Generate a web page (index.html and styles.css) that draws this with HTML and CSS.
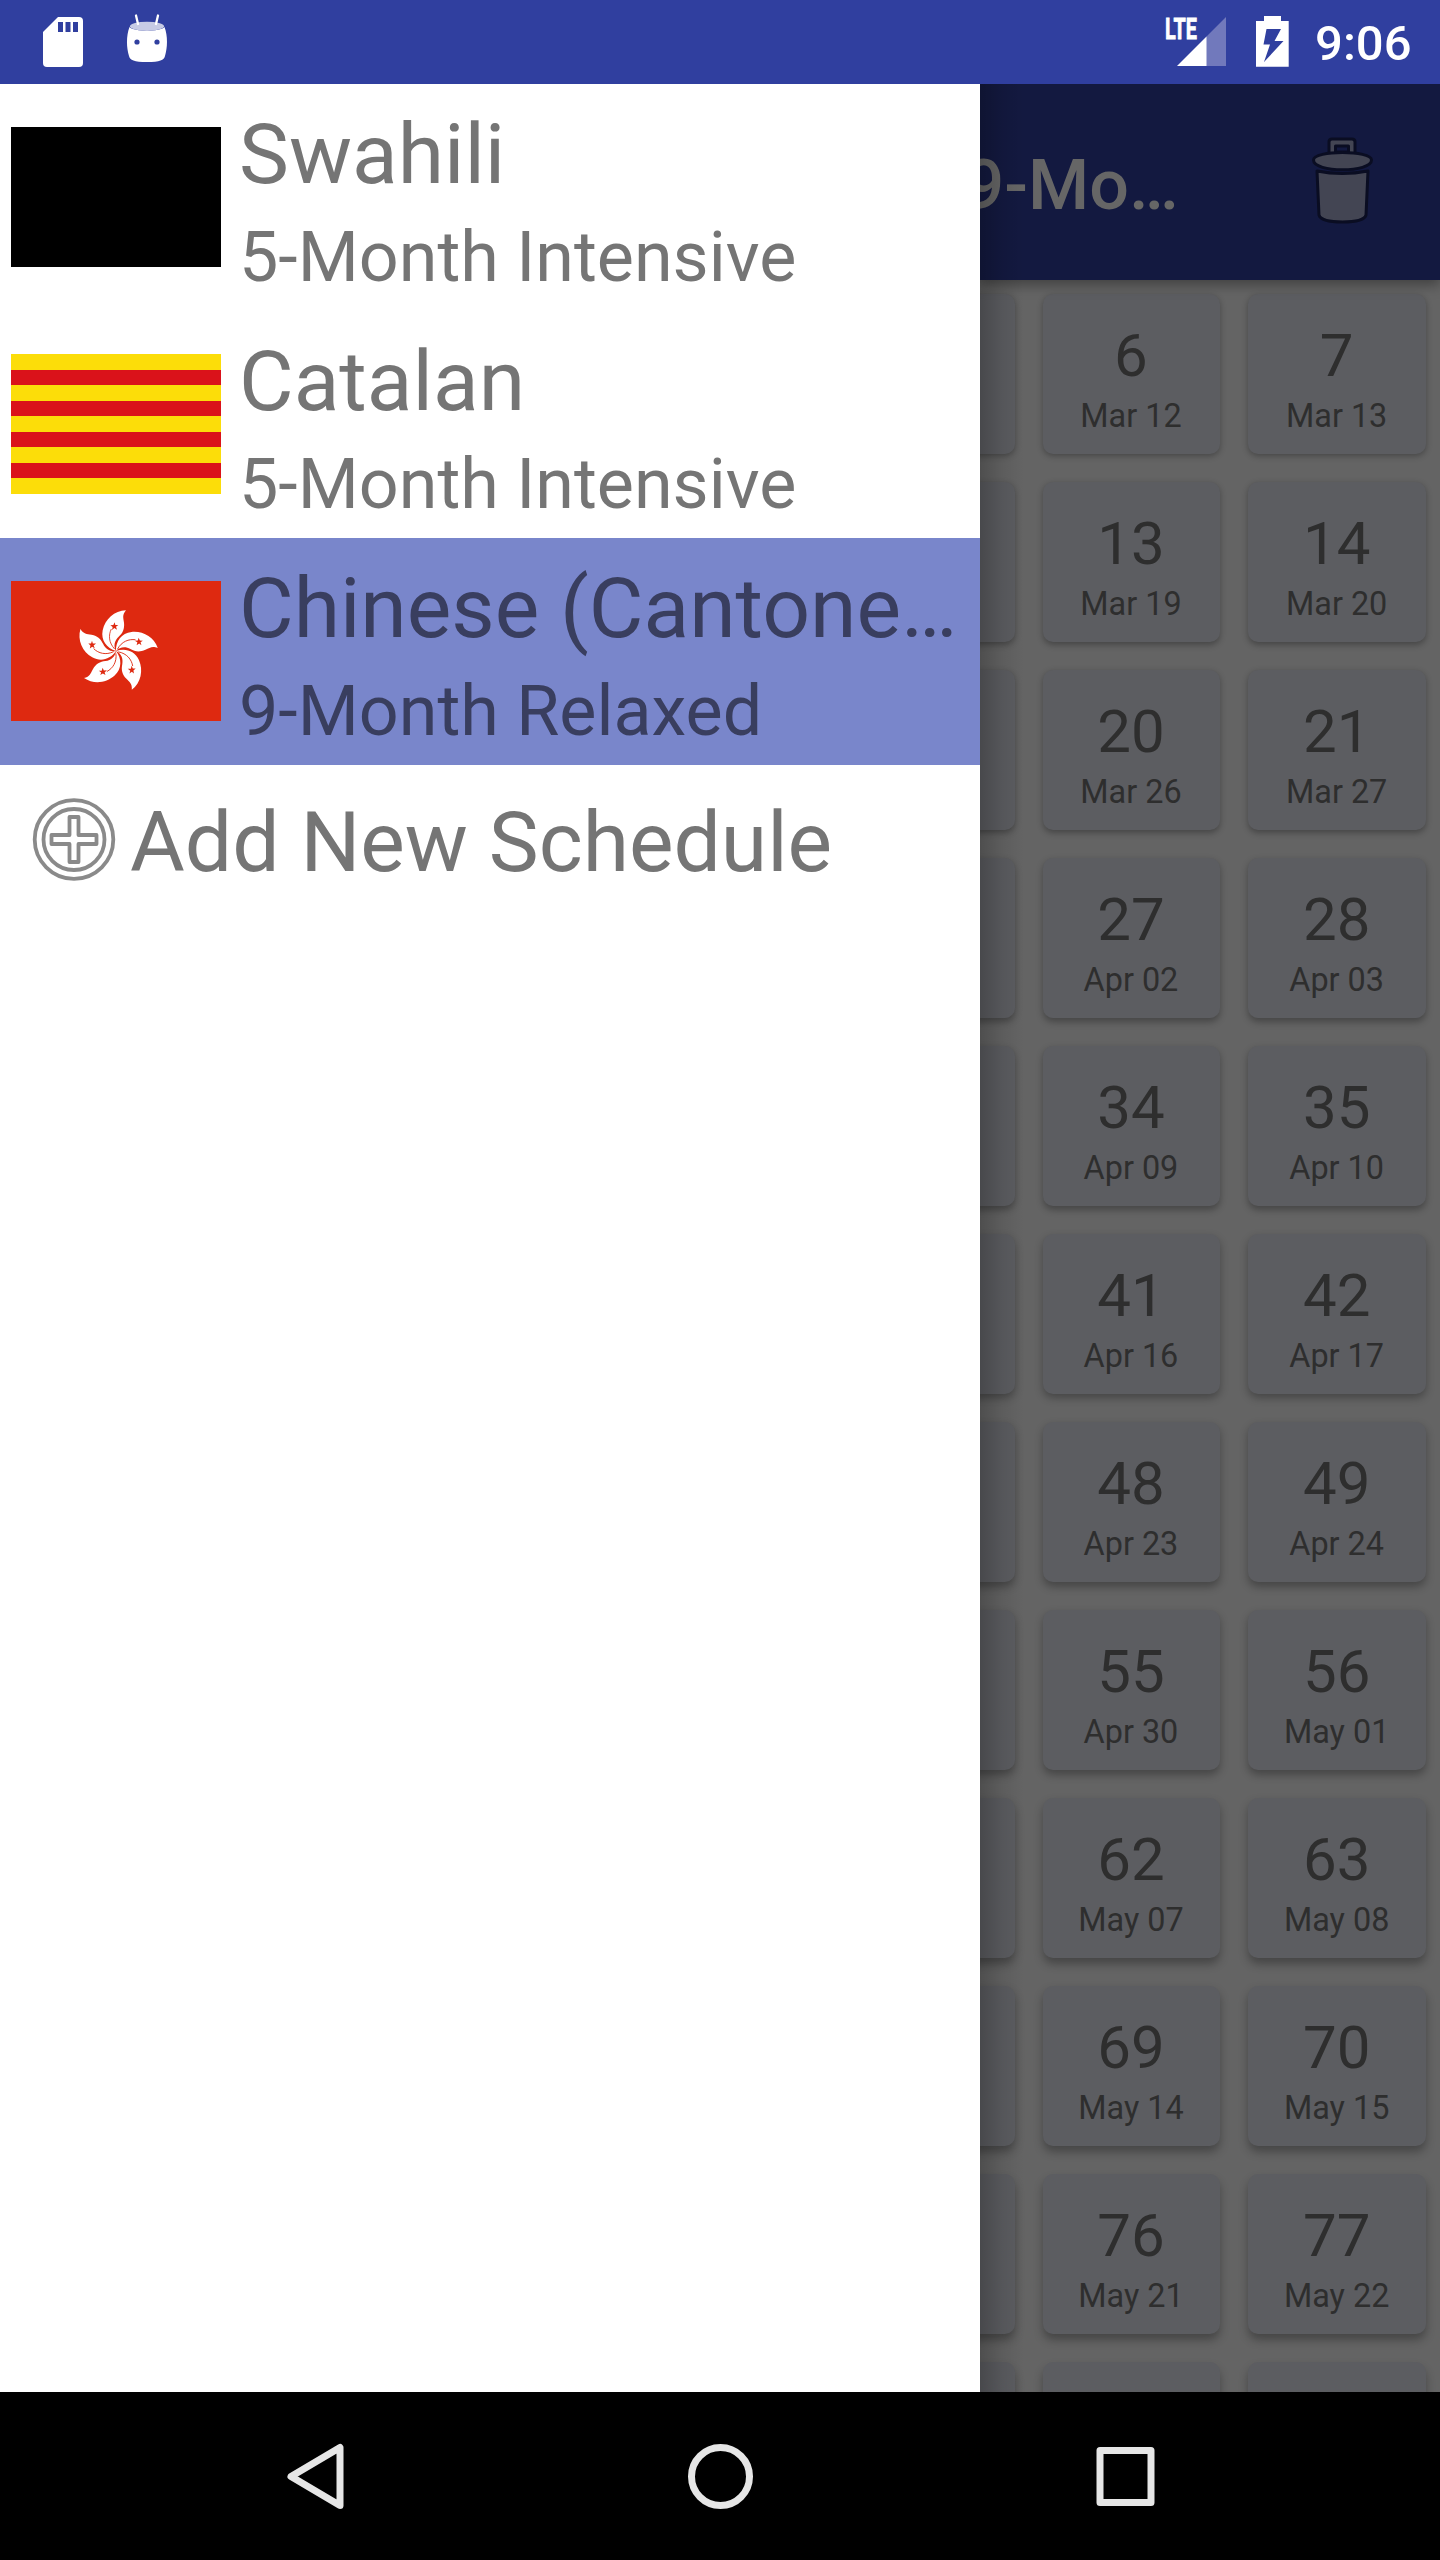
FILE: index.html
```html
<!DOCTYPE html>
<html lang="en">
<head>
<meta charset="utf-8">
<title>Schedules</title>
<link rel="stylesheet" href="styles.css">
</head>
<body>
<div class="screen">
  <header class="status">
    <svg class="status-left" width="180" height="84" viewBox="0 0 180 84">
      <path fill="#fff" d="M58 17H79a4 4 0 0 1 4 4V63a4 4 0 0 1-4 4H47a4 4 0 0 1-4-4V32Z"/>
      <path fill="#303f9f" d="M58 22h5v10h-5zM65.500 22h5v10h-5zM73 22h5v10h-5z"/>
      <path fill="#fff" d="M129.500 27C134 32 160 32 164.500 27C168 36 167.500 48 165 56C164 60 160 62 147 62C134 62 130 60 129 56C126.500 48 126 36 129.500 27Z"/>
      <ellipse cx="147" cy="26.300" rx="17" ry="4.600" fill="#c7cbe5"/>
      <path d="M136 15.500L138 24M158 15.500L156 24" stroke="#fff" stroke-width="2.300" stroke-linecap="round"/>
      <circle cx="137" cy="42" r="2.600" fill="#303f9f"/><circle cx="157" cy="42" r="2.600" fill="#303f9f"/>
    </svg>
    <div class="status-right">
      <svg width="140" height="84" viewBox="1160 0 140 84">
        <path fill="#7179bc" d="M1227 17V66H1207V37Z"/>
        <path fill="#fff" d="M1207.500 36.500V66H1178Z"/>
        <text class="lte" x="1166" y="39" textLength="32" lengthAdjust="spacingAndGlyphs">LTE</text>
        <path fill="#fff" fill-rule="evenodd" d="M1265 16h17v5h7.700v45.700h-32.700V21h8zM1267.500 29l-3 15.500h6.500l-6 17.500l19.500-21h-9l6.500-12z"/>
      </svg>
      <span class="clock">9:06</span>
    </div>
  </header>

  <div class="body">
    <nav class="drawer">
      <div class="row">
        <div class="flag flag-black"></div>
        <div class="texts"><div class="name">Swahili</div><div class="plan">5-Month Intensive</div></div>
      </div>
      <div class="row">
        <div class="flag flag-catalan"></div>
        <div class="texts"><div class="name">Catalan</div><div class="plan">5-Month Intensive</div></div>
      </div>
      <div class="row selected">
        <svg class="flag" viewBox="-315 -210 630 420">
          <defs>
            <g id="petal">
              <path fill="#fff" d="M0 0C-28-8-46-32-40-62C-33-95-5-121 30-122C18-108 22-100 24-85C26-66 20-54 8-43C-5-31-8-15 0 0Z"/>
              <path fill="none" stroke="#de2910" stroke-width="2.500" d="M-14-66C-23-48-22-25-4-6"/>
              <path fill="#de2910" d="M-4-86L-2-78L7-78L0-73L3-64L-5-69L-12-63L-10-72L-17-77L-8-78Z"/>
            </g>
          </defs>
          <rect x="-315" y="-210" width="630" height="420" fill="#de2910"/>
          <use href="#petal"/>
          <use href="#petal" transform="rotate(72)"/>
          <use href="#petal" transform="rotate(144)"/>
          <use href="#petal" transform="rotate(216)"/>
          <use href="#petal" transform="rotate(288)"/>
        </svg>
        <div class="texts"><div class="name">Chinese (Cantone…</div><div class="plan">9-Month Relaxed</div></div>
      </div>
      <div class="add">
        <svg width="84" height="84" viewBox="-42 -42.500 84 84" fill="none" stroke="#8a8a8a" stroke-width="3.800">
          <circle r="39.300"/><circle r="30.500"/>
          <path stroke-linejoin="round" d="M-4.500-22.500H4.500V-4.500H22.500V4.500H4.500V22.500H-4.500V4.500H-22.500V-4.500H-4.500Z"/>
        </svg>
        <span class="name">Add New Schedule</span>
      </div>
    </nav>

    <main class="content">
      <div class="appbar">
        <h1>9-Mo…</h1>
        <svg width="64" height="92" viewBox="1311 135 64 92" stroke="#0a0d22" stroke-width="3" fill="#434553" stroke-linejoin="round">
          <path fill-rule="evenodd" d="M1329 154V142q0-3 3-3h20q3 0 3 3v12zM1335.500 146v6h13v-6z"/>
          <path d="M1317 171q25 5 51 0l-2 44q-2 7-23.500 7t-23.500-7z"/>
          <path d="M1313.500 160c0-10 58-10 58 0c0 13-58 13-58 0z"/>
        </svg>
      </div>
      <div class="grid">
        <div class="week" style="--d:2px"><div class="day"></div><div class="day"><b>6</b><span>Mar 12</span></div><div class="day"><b>7</b><span>Mar 13</span></div></div>
        <div class="week" style="--d:2.400px"><div class="day"></div><div class="day"><b>13</b><span>Mar 19</span></div><div class="day"><b>14</b><span>Mar 20</span></div></div>
        <div class="week" style="--d:2.800px"><div class="day"></div><div class="day"><b>20</b><span>Mar 26</span></div><div class="day"><b>21</b><span>Mar 27</span></div></div>
        <div class="week" style="--d:3.200px"><div class="day"></div><div class="day"><b>27</b><span>Apr 02</span></div><div class="day"><b>28</b><span>Apr 03</span></div></div>
        <div class="week" style="--d:3.600px"><div class="day"></div><div class="day"><b>34</b><span>Apr 09</span></div><div class="day"><b>35</b><span>Apr 10</span></div></div>
        <div class="week" style="--d:4px"><div class="day"></div><div class="day"><b>41</b><span>Apr 16</span></div><div class="day"><b>42</b><span>Apr 17</span></div></div>
        <div class="week" style="--d:4.400px"><div class="day"></div><div class="day"><b>48</b><span>Apr 23</span></div><div class="day"><b>49</b><span>Apr 24</span></div></div>
        <div class="week" style="--d:4.800px"><div class="day"></div><div class="day"><b>55</b><span>Apr 30</span></div><div class="day"><b>56</b><span>May 01</span></div></div>
        <div class="week" style="--d:5.200px"><div class="day"></div><div class="day"><b>62</b><span>May 07</span></div><div class="day"><b>63</b><span>May 08</span></div></div>
        <div class="week" style="--d:5.600px"><div class="day"></div><div class="day"><b>69</b><span>May 14</span></div><div class="day"><b>70</b><span>May 15</span></div></div>
        <div class="week" style="--d:6px"><div class="day"></div><div class="day"><b>76</b><span>May 21</span></div><div class="day"><b>77</b><span>May 22</span></div></div>
        <div class="week" style="--d:6px"><div class="day"></div><div class="day"></div><div class="day"></div></div>
      </div>
      <div class="edge"></div>
    </main>
  </div>

  <footer class="navbar">
    <svg width="1440" height="168" viewBox="0 2392 1440 168" fill="none" stroke="#e6e6e6" stroke-width="7" stroke-linejoin="round">
      <path d="M340 2447.500V2505.500L291 2476.500Z"/>
      <circle cx="720.500" cy="2476.500" r="29"/>
      <rect x="1100" y="2450.500" width="51" height="52"/>
    </svg>
  </footer>
</div>
</body>
</html>
```
FILE: styles.css
```css
* { box-sizing: border-box; }
body { margin: 0; font-family: Roboto, sans-serif; background: #000; }
svg { display: block; flex: none; }

.screen { width: 1440px; height: 2560px; display: flex; flex-direction: column; overflow: hidden; }

.status { height: 84px; flex: none; background: #303f9f; display: flex; justify-content: space-between; }
.status-right { display: flex; align-items: center; padding-right: 28.500px; gap: 16px; }
.lte { font: 700 30px Roboto, sans-serif; fill: #fff; stroke: #fff; stroke-width: .8px; }
.clock { font-size: 49px; font-weight: 500; line-height: 58px; color: #fff; padding-top: 4px; }

.body { flex: 1; min-height: 0; display: flex; }

.drawer { width: 980px; flex: none; background: #fff; color: #757575; }
.row { height: 227px; display: flex; align-items: flex-start; padding: 0 11px; gap: 18px; }
.selected { background: #7986cb; color: #393e5f; }
.flag { width: 210px; height: 140px; flex: none; margin-top: 43px; }
.flag-black { background: #000; }
.flag-catalan { background: repeating-linear-gradient(#fcdd09 0 15.556px, #da121a 15.556px 31.111px); }
.texts { padding-top: 22px; display: flex; flex-direction: column; gap: 12px; white-space: nowrap; }
.name { font-size: 84px; line-height: 98px; white-space: nowrap; }
.plan { font-size: 70px; line-height: 82px; }
.add { display: flex; align-items: flex-start; padding: 32px 0 0 32px; gap: 14px; }
.add .name { margin-top: -3px; }

.content { flex: 1; min-width: 0; position: relative; overflow: hidden; background: #646464; display: flex; flex-direction: column; }
.appbar { height: 196px; flex: none; background: #131940; box-shadow: 0 5px 12px rgba(0, 0, 0, .35); display: flex; justify-content: flex-end; align-items: center; padding-right: 65px; gap: 132.5px; position: relative; }
.appbar h1 { margin: 5px 0 0; font-size: 70px; line-height: 82px; font-weight: 500; color: #666; white-space: nowrap; }
.appbar svg { margin-top: -2px; }
.grid { padding-top: 14px; display: flex; flex-direction: column; align-items: flex-end; gap: 28px; }
.week { display: grid; grid-template-columns: repeat(3, 177.710px); column-gap: 28px; padding-right: 14px; flex: none; }
.day { height: 160px; border-radius: 10px; background: #5c5d61; color: #2e2e2e; display: flex; flex-direction: column; align-items: center; padding: 27px 1px 0 0; gap: 6px; box-shadow: 0 var(--d) calc(4px + var(--d)) rgba(0, 0, 0, .3); }
.day b { font-size: 60px; line-height: 70px; font-weight: 400; }
.day span { font-size: 32.400px; line-height: 39px; }
.edge { position: absolute; inset: 0 auto 0 0; width: 44px; background: linear-gradient(90deg, rgba(0, 0, 0, .22), rgba(0, 0, 0, .08) 50%, transparent); }

.navbar { height: 168px; flex: none; background: #000; }
```
